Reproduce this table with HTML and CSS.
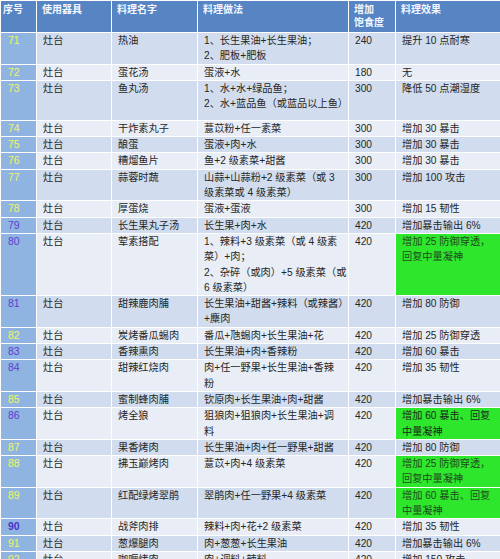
FILE: index.html
```html
<!DOCTYPE html>
<html lang="zh">
<head>
<meta charset="utf-8">
<title>料理表</title>
<link rel="stylesheet" href="styles.css">
</head>
<body>
<table class="recipes">
  <colgroup>
    <col class="c-no"><col class="c-tool"><col class="c-name"><col class="c-how"><col class="c-sat"><col class="c-eff">
  </colgroup>
  <thead>
    <tr><th class="no">序号</th><th>使用器具</th><th>料理名字</th><th>料理做法</th><th>增加<br>饱食度</th><th>料理效果</th></tr>
  </thead>
  <tbody>
    <tr class="b1"><td class="no y">71</td><td>灶台</td><td>热油</td><td>1、长生果油+长生果油；<br>2、肥板+肥板</td><td>240</td><td>提升 10 点耐寒</td></tr>
    <tr class="b2"><td class="no y">72</td><td>灶台</td><td>蛋花汤</td><td>蛋液+水</td><td>180</td><td>无</td></tr>
    <tr class="b1 tall"><td class="no y">73</td><td>灶台</td><td>鱼丸汤</td><td>1、水+水+绿品鱼；<br>2、水+蓝品鱼（或蓝品以上鱼）</td><td>300</td><td>降低 50 点潮湿度</td></tr>
    <tr class="b2"><td class="no y">74</td><td>灶台</td><td>干炸素丸子</td><td>薏苡粉+任一素菜</td><td>300</td><td>增加 30 暴击</td></tr>
    <tr class="b1"><td class="no y">75</td><td>灶台</td><td>酿蛋</td><td>蛋液+肉+水</td><td>300</td><td>增加 30 暴击</td></tr>
    <tr class="b2"><td class="no y">76</td><td>灶台</td><td>糟熘鱼片</td><td>鱼+2 级素菜+甜酱</td><td>300</td><td>增加 30 暴击</td></tr>
    <tr class="b1"><td class="no y">77</td><td>灶台</td><td>蒜蓉时蔬</td><td>山蒜+山蒜粉+2 级素菜（或 3<br>级素菜或 4 级素菜）</td><td>300</td><td>增加 100 攻击</td></tr>
    <tr class="b2"><td class="no y">78</td><td>灶台</td><td>厚蛋烧</td><td>蛋液+蛋液</td><td>300</td><td>增加 15 韧性</td></tr>
    <tr class="b1"><td class="no p">79</td><td>灶台</td><td>长生果丸子汤</td><td>长生果+肉+水</td><td>420</td><td>增加暴击输出 6%</td></tr>
    <tr class="b2"><td class="no p">80</td><td>灶台</td><td>荤素搭配</td><td>1、辣料+3 级素菜（或 4 级素<br>菜）+肉；<br>2、杂碎（或肉）+5 级素菜（或<br>6 级素菜）</td><td>420</td><td class="green">增加 25 防御穿透，<br>回复中量凝神</td></tr>
    <tr class="b1"><td class="no p">81</td><td>灶台</td><td>甜辣鹿肉脯</td><td>长生果油+甜酱+辣料（或辣酱）<br>+麋肉</td><td>420</td><td>增加 80 防御</td></tr>
    <tr class="b2"><td class="no y">82</td><td>灶台</td><td>炭烤番瓜蜴肉</td><td>番瓜+虺蜴肉+长生果油+花</td><td>420</td><td>增加 25 防御穿透</td></tr>
    <tr class="b1"><td class="no p">83</td><td>灶台</td><td>香辣熏肉</td><td>长生果油+肉+香辣粉</td><td>420</td><td>增加 60 暴击</td></tr>
    <tr class="b2"><td class="no p">84</td><td>灶台</td><td>甜辣红烧肉</td><td>肉+任一野果+长生果油+香辣<br>粉</td><td>420</td><td>增加 35 韧性</td></tr>
    <tr class="b1"><td class="no y">85</td><td>灶台</td><td>蜜制蜂肉脯</td><td>钦原肉+长生果油+肉+甜酱</td><td>420</td><td>增加暴击输出 6%</td></tr>
    <tr class="b2"><td class="no p">86</td><td>灶台</td><td>烤全狼</td><td>狙狼肉+狙狼肉+长生果油+调<br>料</td><td>420</td><td class="green dark">增加 60 暴击、回复<br>中量凝神</td></tr>
    <tr class="b1"><td class="no y">87</td><td>灶台</td><td>果香烤肉</td><td>长生果油+肉+任一野果+甜酱</td><td>420</td><td>增加 80 防御</td></tr>
    <tr class="b2"><td class="no y">88</td><td>灶台</td><td>拂玉巅烤肉</td><td>薏苡+肉+4 级素菜</td><td>420</td><td class="green">增加 25 防御穿透，<br>回复中量凝神</td></tr>
    <tr class="b1"><td class="no y">89</td><td>灶台</td><td>红配绿烤翠鹃</td><td>翠鹃肉+任一野果+4 级素菜</td><td>420</td><td class="green">增加 60 暴击、回复<br>中量凝神</td></tr>
    <tr class="b2"><td class="no p bold">90</td><td>灶台</td><td>战斧肉排</td><td>辣料+肉+花+2 级素菜</td><td>420</td><td>增加 35 韧性</td></tr>
    <tr class="b1"><td class="no y">91</td><td>灶台</td><td>葱爆腿肉</td><td>肉+葱葱+长生果油</td><td>420</td><td>增加暴击输出 6%</td></tr>
    <tr class="b2"><td class="no y">92</td><td>灶台</td><td>咖喱烤肉</td><td>肉+调料+辣料</td><td>420</td><td>增加 150 攻击</td></tr>
  </tbody>
</table>
</body>
</html>
```

FILE: styles.css
```css
html, body {
  margin: 0;
  padding: 0;
  background: #ffffff;
  overflow: hidden;
}

.recipes {
  width: 500px;
  table-layout: fixed;
  border-collapse: collapse;
  font-family: "Liberation Sans", "Noto Sans CJK SC", sans-serif;
  font-size: 10.2px;
  color: #262626;
}

.c-no { width: 36px; }
.c-tool { width: 75px; }
.c-name { width: 86px; }
.c-how { width: 151px; }
.c-sat { width: 47px; }
.c-eff { width: 105px; }

.recipes th,
.recipes td {
  border: 1px solid #ffffff;
  vertical-align: top;
  text-align: left;
  white-space: nowrap;
  overflow: hidden;
}

.recipes th {
  height: 29px;
  padding: 2px 4px 0 5px;
  background: #5784c3;
  color: #f4f8ff;
  font-size: 10px;
  font-weight: bold;
  line-height: 13px;
}

.recipes th.no {
  padding-left: 2px;
}

.recipes td {
  padding: 0 3px 0 6px;
  line-height: 15.3px;
}

.b1 td { background: #d1ddee; }
.b2 td { background: #e8edf6; }

.recipes td.no {
  background: #8fb4e1;
  padding-left: 7px;
  font-size: 10.5px;
}

.recipes td.y { color: #eef562; }
.recipes td.p { color: #5d3fcf; }
.recipes td.bold { font-weight: bold; color: #4a36c8; }

.tall td { height: 39px; }

.recipes td.green {
  background: #2ee62c;
  color: #1f4d1f;
}

.recipes td.green.dark {
  color: #1c2a1c;
}
```
